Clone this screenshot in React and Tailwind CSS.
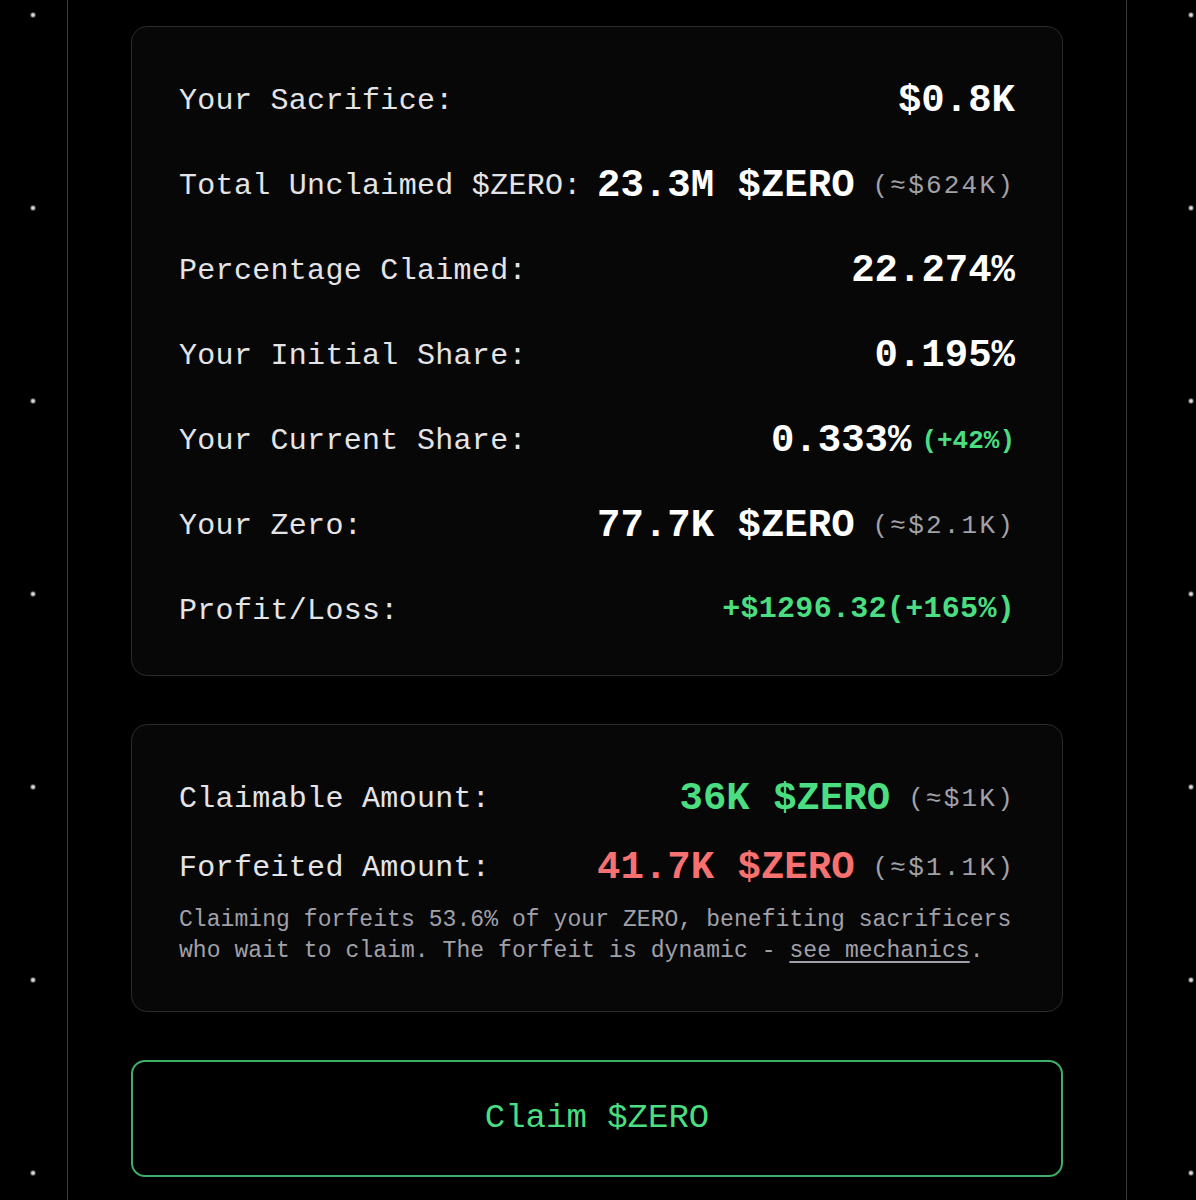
const mono = "font-['Liberation_Mono',monospace]";

const stats = [
  { label: "Your Sacrifice:", value: "$0.8K" },
  { label: "Total Unclaimed $ZERO:", value: "23.3M $ZERO", usd: "$624K" },
  { label: "Percentage Claimed:", value: "22.274%" },
  { label: "Your Initial Share:", value: "0.195%" },
  { label: "Your Current Share:", value: "0.333%", change: "(+42%)" },
  { label: "Your Zero:", value: "77.7K $ZERO", usd: "$2.1K" },
  { label: "Profit/Loss:", profit: "+$1296.32(+165%)" },
];

function Usd({ amount }) {
  return (
    <span className="text-[26px] tracking-[2.2px] text-[#a1a1aa]">
      (≈{amount})
    </span>
  );
}

function StatRow({ label, value, usd, change, profit }) {
  return (
    <div className="flex h-[85px] items-center justify-between">
      <span className="text-[30px] tracking-[0.3px] text-[#e4e4e7]">{label}</span>
      <div className="flex items-center gap-[18px]">
        {value && (
          <span className="text-[39px] font-bold leading-none text-white">{value}</span>
        )}
        {change && (
          <span className="-ml-[8px] text-[26px] font-bold text-[#4ade80]">{change}</span>
        )}
        {usd && <Usd amount={usd} />}
        {profit && (
          <span className="-mt-[5px] text-[30px] font-bold tracking-[0.3px] text-[#4ade80]">{profit}</span>
        )}
      </div>
    </div>
  );
}

function AmountRow({ label, value, usd, color }) {
  return (
    <div className="flex h-[69px] items-center justify-between">
      <span className="text-[30px] tracking-[0.3px] text-[#e4e4e7]">{label}</span>
      <div className="flex items-center gap-[18px]">
        <span className={`text-[39px] font-bold leading-none ${color}`}>{value}</span>
        <Usd amount={usd} />
      </div>
    </div>
  );
}

export default function App() {
  return (
    <div
      className={`${mono} min-h-[1200px] bg-black bg-[radial-gradient(circle,rgba(255,255,255,0.85)_1.5px,transparent_3px)] bg-[length:193px_193px] bg-[position:-63.5px_-81.5px]`}
    >
      <div className="ml-[67px] min-h-[1200px] w-[1060px] border-x border-[#3a3a3a] bg-black px-[63px] pt-[26px]">
        <div className="flex flex-col gap-12">
          <div className="rounded-[16px] border border-[#2a2a2a] bg-[#070707] px-[47px] pt-[32px] pb-[21px]">
            {stats.map((s) => (
              <StatRow key={s.label} {...s} />
            ))}
          </div>

          <div className="rounded-[16px] border border-[#2a2a2a] bg-[#070707] px-[47px] pt-[40px] pb-[44px]">
            <AmountRow label="Claimable Amount:" value="36K $ZERO" usd="$1K" color="text-[#4ade80]" />
            <AmountRow label="Forfeited Amount:" value="41.7K $ZERO" usd="$1.1K" color="text-[#f87171]" />
            <p className="mt-[2px] text-[23px] leading-[31px] tracking-[0.07px] text-[#a1a1aa]">
              Claiming forfeits 53.6% of your ZERO, benefiting sacrificers who wait to claim. The
              forfeit is dynamic - <a href="#" className="underline underline-offset-4">see mechanics</a>.
            </p>
          </div>

          <button className="flex h-[117px] items-center justify-center rounded-[14px] border-2 border-[#3fae66] bg-black text-[34px] text-[#4ade80]">
            Claim $ZERO
          </button>
        </div>
      </div>
    </div>
  );
}
